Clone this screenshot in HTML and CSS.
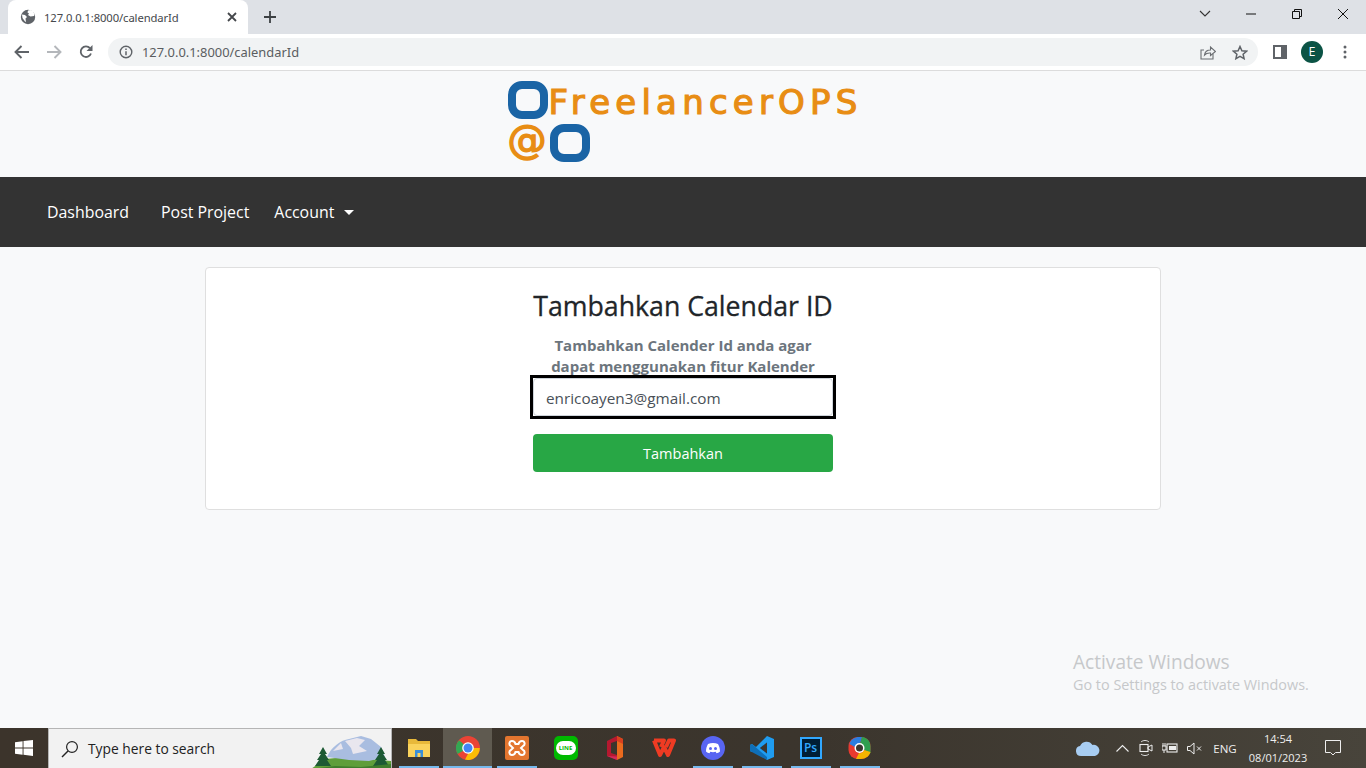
FILE: index.html
```html
<!DOCTYPE html>
<html lang="en">
<head>
<meta charset="UTF-8">
<meta name="viewport" content="width=device-width, initial-scale=1.0">
<title>Tambahkan Calendar ID</title>
<link rel="stylesheet" href="styles.css">
</head>
<body>
<div class="screen">

  <div class="tabbar">
    <div class="tab">
      <svg class="tab-globe" width="16" height="16" viewBox="0 0 16 16"><circle cx="8" cy="8" r="7.2" fill="#5f6368"/><path d="M2 5.500l3 .5 2 2-1.500 1.500.5 3.500-1-.5L2.500 9zM8 1.500l-.5 2L9 4.500l-1 1.500 2.500 1.500 3.500-.5 .5-1.500-1.500-3.500-2.500-1z" fill="#fff"/></svg>
      <span class="tab-title">127.0.0.1:8000/calendarId</span>
      <svg class="tab-close" width="10" height="10" viewBox="0 0 10 10"><path d="M1 1l8 8M9 1l-8 8" stroke="#44474b" stroke-width="1.800"/></svg>
    </div>
    <svg class="tab-new" width="12" height="12" viewBox="0 0 12 12"><path d="M6 0v12M0 6h12" stroke="#3c4043" stroke-width="1.800"/></svg>
    <div class="winbtns">
      <svg width="12" height="8" viewBox="0 0 12 8"><path d="M1 1l5 5 5-5" fill="none" stroke="#333" stroke-width="1.100"/></svg>
      <svg width="10" height="10" viewBox="0 0 10 10"><path d="M0 5h10" stroke="#111" stroke-width="1"/></svg>
      <svg width="10" height="10" viewBox="0 0 10 10"><path d="M.5 2.500h7v7h-7zM2.500 2.500v-2h7v7h-2" fill="none" stroke="#111" stroke-width="1"/></svg>
      <svg width="10" height="10" viewBox="0 0 10 10"><path d="M0 0l10 10M10 0L0 10" stroke="#111" stroke-width="1"/></svg>
    </div>
  </div>

  <div class="toolbar">
    <svg class="tool-back" width="16" height="14" viewBox="0 0 16 14"><path d="M15 7H2M7.500 1L1.500 7l6 6" fill="none" stroke="#5f6368" stroke-width="1.900"/></svg>
    <svg class="tool-fwd" width="16" height="14" viewBox="0 0 16 14"><path d="M1 7h13M8.500 1l6 6-6 6" fill="none" stroke="#b4b7bb" stroke-width="1.900"/></svg>
    <svg class="tool-reload" width="14" height="14" viewBox="0 0 14 14"><path d="M12 8.500A5.300 5.300 0 1 1 11 3.200" fill="none" stroke="#5f6368" stroke-width="1.800"/><path d="M13.500 0v6h-6z" fill="#5f6368"/></svg>
    <div class="omnibox">
      <svg width="14" height="14" viewBox="0 0 14 14"><circle cx="7" cy="7" r="5.800" fill="none" stroke="#5f6368" stroke-width="1.400"/><path d="M7 6.200v4M7 3.600v1.500" stroke="#5f6368" stroke-width="1.500"/></svg>
      <span class="url">127.0.0.1:8000/calendarId</span>
      <svg class="omni-share" width="16" height="15" viewBox="0 0 16 15"><path d="M13 9v5H1V5h3" fill="none" stroke="#6b6e72" stroke-width="1.100"/><path d="M4.500 10c.5-3.500 3-5 6-5V2l5 4.500-5 4V8c-2.500-.2-4.500.4-6 2z" fill="none" stroke="#6b6e72" stroke-width="1.100"/></svg>
      <svg class="omni-star" width="16" height="15" viewBox="0 0 16 15"><path d="M8 1.500l1.900 4.200 4.600.5-3.400 3 1 4.500L8 11.400l-4.100 2.300 1-4.500-3.400-3 4.600-.5z" fill="none" stroke="#5f6368" stroke-width="1.500"/></svg>
    </div>
    <svg class="tool-panel" width="14" height="14" viewBox="0 0 14 14"><path d="M0 0h14v14H0z" fill="#5f6368"/><path d="M2 2h6v10H2z" fill="#fff"/></svg>
    <div class="avatar">E</div>
    <svg class="tool-menu" width="4" height="14" viewBox="0 0 4 14"><circle cx="2" cy="2" r="1.500" fill="#5f6368"/><circle cx="2" cy="7" r="1.500" fill="#5f6368"/><circle cx="2" cy="12" r="1.500" fill="#5f6368"/></svg>
  </div>

  <div class="page">
    <header class="brand">
      <div class="logo">
        <div class="logo-row">
          <span class="logo-o"></span>
          <span class="logo-name">FreelancerOPS</span>
        </div>
        <div class="logo-row">
          <span class="logo-at">@</span>
          <span class="logo-o"></span>
        </div>
      </div>
    </header>

    <nav class="navbar">
      <a class="nav-link nav-first">Dashboard</a>
      <a class="nav-link nav-second">Post Project</a>
      <a class="nav-link nav-third">Account<span class="caret"></span></a>
    </nav>

    <main class="card">
      <form class="form">
        <h2 class="form-title">Tambahkan Calendar ID</h2>
        <p class="form-note">Tambahkan Calender Id anda agar dapat menggunakan fitur Kalender</p>
        <div class="form-focus">
          <div class="form-input">enricoayen3@gmail.com</div>
        </div>
        <div class="form-btn">Tambahkan</div>
      </form>
    </main>

    <div class="activate">
      <div class="activate-title">Activate Windows</div>
      <div class="activate-sub">Go to Settings to activate Windows.</div>
    </div>
  </div>

  <footer class="taskbar">
    <div class="start">
      <svg width="18" height="16" viewBox="0 0 18 16"><path d="M0 2.300l7.600-1.100v6.400H0zM8.500 1.100L18 0v7.600H8.500zM0 8.400h7.600v6.400L0 13.700zM8.500 8.400H18V16l-9.500-1.200z" fill="#fff"/></svg>
    </div>
    <div class="search">
      <svg width="18" height="18" viewBox="0 0 18 18"><circle cx="11" cy="7" r="5.400" fill="none" stroke="#222" stroke-width="1.200"/><path d="M7 11l-6 6" stroke="#222" stroke-width="1.500"/></svg>
      <span class="search-text">Type here to search</span>
      <svg class="search-art" width="80" height="40" viewBox="0 0 80 40"><path d="M0 40l14-10 22-2 44 4v8z" fill="#5f9e3a"/><path d="M16 28C20 18 30 11 38 10l12-3 10 3 10 8 4 10-16 4-20-1z" fill="#a9bde0"/><path d="M34 12l12-3 8 2-6 6 8 5-14 3-2-6zM22 22l8-8 2 6z" fill="#e9e6ee"/><path d="M12 18l-4 7h2l-4 6h2l-4 6h16l-4-6h2l-4-6h2zM70 18l-4 7h2l-4 6h2l-4 6h16l-4-6h2l-4-6h2z" fill="#1d5a34"/><path d="M0 40l24-3 26 1 30-3v5z" fill="#3f7d2c"/></svg>
    </div>
    <div class="apps">
      <div class="app app-on">
        <svg width="22" height="18" viewBox="0 0 22 18"><path d="M0 0h8l2 2h12v16H0z" fill="#e8b93a"/><path d="M0 5h22v13H0z" fill="#fad35c"/><path d="M7 11h8v7h-2.500v-4h-3v4H7z" fill="#3a8fd8"/></svg>
      </div>
      <div class="app app-on app-active">
        <svg width="24" height="24" viewBox="0 0 24 24"><circle cx="12" cy="12" r="12" fill="#ea4335"/><path d="M12 12L1.600 18A12 12 0 0 1 3 4.200z" fill="#34a853"/><path d="M12 12h11.800A12 12 0 0 1 9 23.600L12 18z" fill="#fbbc05"/><circle cx="12" cy="12" r="5.800" fill="#fff"/><circle cx="12" cy="12" r="4.500" fill="#4285f4"/></svg>
      </div>
      <div class="app app-on">
        <svg width="24" height="24" viewBox="0 0 24 24"><rect width="24" height="24" rx="2" fill="#e3752f"/><path d="M7 5c-3 0-3.500 4-1 5l2 2-2 2c-2.500 1-2 5 1 5 2 0 3-1 3.500-3h3c.5 2 1.500 3 3.500 3 3 0 3.500-4 1-5l-2-2 2-2c2.500-1 2-5-1-5-2 0-3 1-3.500 3h-3C10 6 9 5 7 5z" fill="none" stroke="#fff" stroke-width="2"/></svg>
      </div>
      <div class="app">
        <div class="icon-line"><span class="icon-line-bubble">LINE</span></div>
      </div>
      <div class="app">
        <svg width="18" height="24" viewBox="0 0 18 24"><path d="M1 5L11 0v5L5 7v10l6 2v5L1 20z" fill="#b5182f"/><path d="M11 0l6 3v18l-6 3z" fill="#ea6a1e"/><path d="M11 0l6 3v5l-6-3z" fill="#d8401f"/><path d="M1 20l10 .5V24z" fill="#d42a5a"/></svg>
      </div>
      <div class="app">
        <svg width="24" height="20" viewBox="0 0 24 20"><path d="M2 2.500h10L9 9M2 2.500L8 17l4-8 4 8 6-14.500h-5L14 9" fill="none" stroke="#ef3b23" stroke-width="4" stroke-linejoin="round"/></svg>
      </div>
      <div class="app app-on">
        <svg width="24" height="24" viewBox="0 0 24 24"><circle cx="12" cy="12" r="12" fill="#5865f2"/><path d="M7 8c3-1.300 7-1.300 10 0 1.500 2.500 2 5 2 7.500-1.200 1-2.500 1.500-3.500 1.700l-.8-1.400c-2 .6-3.400.6-5.400 0l-.8 1.400C7.500 17 6.200 16.500 5 15.500 5 13 5.500 10.500 7 8z" fill="#fff"/><circle cx="9.500" cy="12.500" r="1.500" fill="#5865f2"/><circle cx="14.500" cy="12.500" r="1.500" fill="#5865f2"/></svg>
      </div>
      <div class="app app-on">
        <svg width="24" height="24" viewBox="0 0 24 24"><path d="M17 0l7 3v18l-7 3L6 13l-4 3-2-1V9l2-1 4 3z" fill="#1f9cf0"/><path d="M17 6.500L10 12l7 5.500zM0 9l2-1 15 13v3L0 15z" fill="#0f6fb8"/><path d="M17 6.500L10 12l7 5.500z" fill="#3c3630"/></svg>
      </div>
      <div class="app app-on">
        <div class="icon-ps">Ps</div>
      </div>
      <div class="app app-on">
        <svg width="23" height="24" viewBox="0 0 23 24"><rect x=".5" y="1" width="22" height="22" rx="9" fill="#e8392f"/><path d="M1.500 8C3 3 7 1 11 1h3L12 8C9 8 8 9 7 11z" fill="#2b7de0"/><path d="M14 1c5 .5 8.500 4 8.500 9.500V17L16 14c.5-2.500-1-5-4-6z" fill="#2f9e4f"/><path d="M22.500 16c-1 4-5 7-9.500 7H8l3-6c2 .5 4-.5 5-3z" fill="#f4b400"/><circle cx="11.500" cy="12" r="5" fill="#fff"/><circle cx="11.500" cy="12" r="3.500" fill="#3c3630"/></svg>
      </div>
    </div>
    <div class="tray">
      <div class="tray-item tray-cloud">
        <svg width="25" height="15" viewBox="0 0 25 15"><path d="M6 15a5 5 0 0 1-1-9.900A7 7 0 0 1 17.500 4 5.500 5.500 0 0 1 20 15z" fill="#a8cdf2"/></svg>
      </div>
      <div class="tray-item">
        <svg width="13" height="8" viewBox="0 0 13 8"><path d="M.5 7.500l6-6 6 6" fill="none" stroke="#eee" stroke-width="1.100"/></svg>
      </div>
      <div class="tray-item">
        <svg width="14" height="18" viewBox="0 0 14 18"><path d="M2 3c2-2 6-2 8 0M2 15c2 2 6 2 8 0" fill="none" stroke="#ddd" stroke-width="1"/><rect x="1" y="5.500" width="8" height="7" fill="none" stroke="#eee" stroke-width="1.100"/><path d="M9 8l4-2v6l-4-2z" fill="none" stroke="#eee"/></svg>
      </div>
      <div class="tray-item">
        <svg width="16" height="12" viewBox="0 0 16 12"><rect x="5" y="2" width="10" height="8" fill="none" stroke="#eee" stroke-width="1.100"/><rect x="7" y="4" width="7" height="4" fill="#eee"/><path d="M0 4h4v4H0zM1 1v3M3 1v3M2 8v3" stroke="#eee" stroke-width="1" fill="none"/></svg>
      </div>
      <div class="tray-item">
        <svg width="15" height="13" viewBox="0 0 15 13"><path d="M.5 4.500h2.500L7 1v11L3 8.500H.5z" fill="none" stroke="#eee" stroke-width="1"/><path d="M10 4.500l4 4M14 4.500l-4 4" stroke="#eee" stroke-width="1"/></svg>
      </div>
      <div class="tray-lang">ENG</div>
      <div class="tray-clock">
        <div>14:54</div>
        <div>08/01/2023</div>
      </div>
      <div class="tray-note">
        <svg width="16" height="16" viewBox="0 0 16 16"><path d="M.5.500h15v12h-5L8 15l-2.500-2.500h-5z" fill="none" stroke="#eee" stroke-width="1"/></svg>
      </div>
    </div>
  </footer>

</div>
</body>
</html>
```

FILE: styles.css
```css
* {
  box-sizing: border-box;
}

body {
  margin: 0;
  font-family: "Open Sans", "Noto Sans", Arial, sans-serif;
  background-color: #f8f9fa;
  overflow: hidden;
}

.screen {
  display: flex;
  flex-direction: column;
  width: 1366px;
  height: 768px;
}

/* browser chrome */
.tabbar {
  display: flex;
  align-items: center;
  height: 34px;
  padding-left: 8px;
  background-color: #dee1e6;
}

.tab {
  display: flex;
  align-items: center;
  width: 240px;
  height: 34px;
  padding: 0 11px 0 12px;
  background-color: #fff;
  border-radius: 8px 8px 0 0;
}

.tab-title {
  flex: 1;
  margin-left: 8px;
  font-family: "Noto Sans", sans-serif;
  font-size: 11.250px;
  letter-spacing: -0.1px;
  color: #45484c;
}

.tab-new {
  margin-left: 16px;
}

.winbtns {
  display: flex;
  align-items: center;
  gap: 36px;
  margin-left: auto;
  margin-right: 18px;
  margin-top: -6px;
}

.winbtns svg:first-child {
  margin-right: -1px;
}

.toolbar {
  display: flex;
  align-items: center;
  height: 37px;
  padding-left: 14px;
  background-color: #fff;
  border-bottom: 1px solid #dcdcdc;
}

.tool-fwd {
  margin-left: 16px;
}

.tool-reload {
  margin-left: 17px;
}

.omnibox {
  display: flex;
  align-items: center;
  width: 1150px;
  height: 28px;
  margin-left: 15px;
  padding: 0 10px 0 11px;
  background-color: #f1f3f4;
  border-radius: 14px;
}

.url {
  flex: 1;
  margin-left: 9px;
  font-family: "Noto Sans", sans-serif;
  font-size: 12.900px;
  color: #5a5d61;
}

.omni-star {
  margin-left: 16px;
}

.tool-panel {
  margin-left: 15px;
}

.avatar {
  width: 22px;
  height: 22px;
  margin-left: 14px;
  border-radius: 50%;
  background-color: #0b5345;
  color: #fff;
  font-size: 12.500px;
  line-height: 22px;
  text-align: center;
}

.tool-menu {
  margin-left: 20px;
}

/* page */
.page {
  position: relative;
  flex: 1;
  background-color: #f8f9fa;
}

.brand {
  display: flex;
  justify-content: center;
  height: 106px;
  padding-top: 7px;
}

.logo {
  width: 351px;
}

.logo-row {
  display: flex;
  align-items: center;
  height: 43px;
}

.logo-o {
  flex: none;
  width: 40px;
  height: 38px;
  border: 8px solid #1a64a5;
  border-radius: 14px;
}

.logo-name {
  margin: 5px 0 0 1px;
  font-family: "DejaVu Sans", sans-serif;
  font-size: 34px;
  line-height: 38px;
  letter-spacing: 5.200px;
  white-space: nowrap;
  color: #e88d14;
  -webkit-text-stroke: 1.200px #e88d14;
}

.logo-at {
  width: 41px;
  margin: -5px 1px 0 0;
  font-family: "DejaVu Sans", sans-serif;
  font-size: 39px;
  line-height: 38px;
  color: #e88d14;
  -webkit-text-stroke: 1.500px #e88d14;
}

.navbar {
  display: flex;
  align-items: center;
  height: 70px;
  padding: 0 0 1px 47px;
  background-color: #333;
}

.nav-link {
  font-size: 15.900px;
  color: #fff;
}

.nav-second {
  margin-left: 32px;
}

.nav-third {
  margin-left: 25px;
}

.caret {
  display: inline-block;
  margin-left: 10px;
  vertical-align: 3px;
  border-top: 5px solid #fff;
  border-left: 5px solid transparent;
  border-right: 5px solid transparent;
}

.card {
  width: 956px;
  height: 243px;
  margin: 20px auto 0;
  padding-top: 19px;
  background-color: #fff;
  border: 1px solid #dfdfdf;
  border-radius: 4px;
}

.form {
  width: 300px;
  margin: 0 auto;
  text-align: center;
}

.form-title {
  margin: 0;
  font-size: 26.700px;
  font-weight: 500;
  line-height: 38px;
  white-space: nowrap;
  color: #212529;
  -webkit-text-stroke: 0.300px #212529;
}

.form-note {
  margin: 10px 0 0;
  font-size: 15px;
  font-weight: 700;
  line-height: 21px;
  color: #6c757d;
}

.form-focus {
  margin: -2px -3px 0;
  border: 3px solid #000;
}

.form-input {
  height: 38px;
  padding: 0 12px;
  background-color: #fff;
  border: 1px solid #ced4da;
  border-radius: 4px;
  font-size: 15.300px;
  line-height: 38px;
  text-align: left;
  color: #495057;
}

.form-btn {
  height: 38px;
  margin-top: 15px;
  background-color: #28a745;
  border-radius: 4px;
  font-size: 14.500px;
  line-height: 39px;
  color: #fff;
}

.activate {
  position: absolute;
  left: 1073px;
  top: 578px;
  color: #c6c8ca;
}

.activate-title {
  font-size: 19.100px;
  line-height: 26px;
}

.activate-sub {
  margin-top: 1px;
  font-size: 14.400px;
  line-height: 18px;
}

/* windows taskbar */
.taskbar {
  display: flex;
  height: 40px;
  background: linear-gradient(90deg, #3c342b, #3b352d 60%, #48443b);
}

.start {
  display: flex;
  align-items: center;
  justify-content: center;
  width: 48px;
}

.search {
  display: flex;
  align-items: center;
  width: 344px;
  padding-left: 12px;
  background-color: #f2f2f2;
  border: 1px solid #b5b5b5;
  border-width: 1px 1px 0;
}

.search-text {
  margin-left: 9px;
  font-size: 13.800px;
  color: #222;
}

.search-art {
  margin-left: auto;
}

.apps {
  display: flex;
  margin-left: 2px;
}

.app {
  position: relative;
  display: flex;
  align-items: center;
  justify-content: center;
  width: 49px;
  height: 40px;
}

.app-on::after {
  content: "";
  position: absolute;
  left: 5px;
  right: 4px;
  bottom: 0;
  height: 2px;
  background-color: #76b9ed;
}

.app-active {
  background-color: #5f5a50;
}

.app-active::after {
  left: 0;
  right: 0;
}

.icon-line {
  display: flex;
  align-items: center;
  justify-content: center;
  width: 24px;
  height: 24px;
  background-color: #00b900;
  border-radius: 5px;
}

.icon-line-bubble {
  width: 20px;
  height: 14px;
  background-color: #fff;
  border-radius: 7px;
  font-size: 6px;
  font-weight: 700;
  line-height: 14px;
  text-align: center;
  color: #00b900;
}

.icon-ps {
  width: 22px;
  height: 22px;
  background-color: #001e36;
  border: 2px solid #31a8ff;
  font-size: 12px;
  font-weight: 600;
  line-height: 17px;
  text-align: center;
  color: #31a8ff;
}

.tray {
  display: flex;
  align-items: center;
  margin-left: auto;
  padding-right: 9px;
  color: #eee;
}

.tray-item {
  display: flex;
  align-items: center;
  justify-content: center;
  width: 24px;
  height: 40px;
}

.tray-cloud {
  width: 36px;
  margin-right: 5px;
}

.tray-lang {
  width: 34px;
  margin: 0 5px 0 2px;
  font-size: 11.500px;
  text-align: center;
}

.tray-clock {
  width: 62px;
  font-size: 11px;
  line-height: 19px;
  text-align: center;
}

.tray-note {
  display: flex;
  justify-content: center;
  width: 48px;
}
```
